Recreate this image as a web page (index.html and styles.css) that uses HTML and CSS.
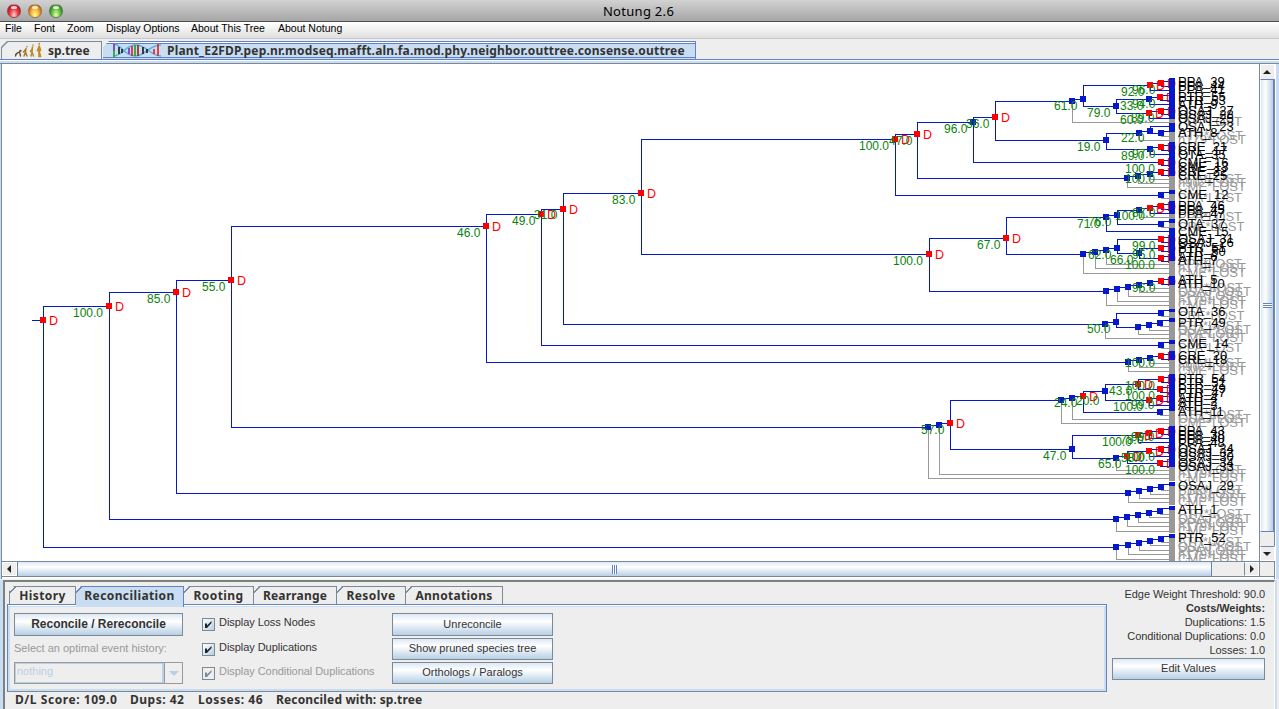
FILE: index.html
```html
<!DOCTYPE html>
<html lang="en">
<head>
<meta charset="utf-8">
<title>Notung 2.6</title>
<link rel="stylesheet" href="styles.css">
</head>
<body>
<header class="titlebar">
  <div class="lights"><i class="light red"></i><i class="light amber"></i><i class="light green"></i></div>
  <h1 class="title">Notung 2.6</h1>
</header>
<nav class="menubar">
  <span class="m-file">File</span><span class="m-font">Font</span><span class="m-zoom">Zoom</span><span class="m-display">Display Options</span><span class="m-tree">About This Tree</span><span>About Notung</span>
</nav>
<div class="doctabs">
  <div class="doctab plain">
    <svg width="30" height="16" viewBox="0 0 30 16" fill="none" stroke-linecap="round">
      <g stroke="#5b4a30" stroke-width="1.3"><path d="M2.500 14l1-2.500 3-1.500 1 4M4 11.500l-1.500 1"/><circle cx="7.500" cy="8.800" r=".5"/></g>
      <g stroke="#a87926" stroke-width="1.400"><path d="M11 14l1.500-4 .5-3.500M12.500 10l1.500 4M12.500 7.500l-2 2.500M14 4.500v.2"/></g>
      <g stroke="#b98a2c" stroke-width="1.500"><path d="M18 14l1-4 .5-5M19 10l1.500 4M19.500 6l-2 3.500M20 3v.2"/></g>
      <g stroke="#c08a1e" stroke-width="1.700"><path d="M26 14.500V4M26 9l1.500 5.500M26 5l-1.500 3.500M26.500 5l1 3.500M26.300 1.700v.2"/></g>
    </svg>
    <span>sp.tree</span>
  </div>
  <div class="doctab current">
    <svg width="50" height="13" viewBox="0 0 50 13" fill="none">
      <path stroke="#58aee0" stroke-width="1.500" d="M1 0C10 0 12 12 23 12S36 1 49 1M1 12C11 12 13 1 24 1S38 12 49 12"/>
      <g stroke-width="1.700"><path stroke="#7935b5" d="M2 0v7"/><path stroke="#25a32d" d="M2 6v7"/><path stroke="#222" d="M7 3v7M31 3v7M10 5v4M35 5v4"/><path stroke="#7935b5" d="M17 4v6"/><path stroke="#e32525" d="M20 2v10"/><path stroke="#25a32d" d="M23 1v11"/><path stroke="#a02a20" d="M26 1v11"/><path stroke="#e32525" d="M46 0v12M42 5v5"/></g>
    </svg>
    <span>Plant_E2FDP.pep.nr.modseq.mafft.aln.fa.mod.phy.neighbor.outtree.consense.outtree</span>
  </div>
  <div class="doctab-rest"></div>
</div>
<main class="workspace">
  <svg class="tree" id="tree" width="1257" height="497" viewBox="2 64 1257 497"></svg>
  <div class="vscroll"><div class="arrow up"></div><div class="vthumb"><i class="vgrip"></i></div><div class="vtrack"></div><div class="arrow down"></div></div>
  <div class="hscroll"><div class="arrow left"></div><div class="hthumb"><i class="hgrip"></i></div><div class="htrack"></div><div class="arrow right"></div></div>
  <div class="corner"></div>
</main>
<section class="controls">
  <div class="taskpane">
    <div class="tabs">
      <span class="tab t-history">History</span><span class="tab t-recon active">Reconciliation</span><span class="tab t-root">Rooting</span><span class="tab t-rearr">Rearrange</span><span class="tab t-resolve">Resolve</span><span class="tab t-annot">Annotations</span>
    </div>
    <div class="panel">
      <div class="col first">
        <button class="btn strong">Reconcile / Rereconcile</button>
        <label class="hint">Select an optimal event history:</label>
        <div class="combo"><span class="combo-value">nothing</span><span class="combo-arrow"></span></div>
      </div>
      <div class="col checks">
        <label class="check"><svg class="box" width="13" height="13" viewBox="1 1 11 11"><path d="M3 5.500h2v2L9.500 3v2L5 10H3z"/></svg>Display Loss Nodes</label>
        <label class="check"><svg class="box" width="13" height="13" viewBox="1 1 11 11"><path d="M3 5.500h2v2L9.500 3v2L5 10H3z"/></svg>Display Duplications</label>
        <label class="check off"><svg class="box" width="13" height="13" viewBox="1 1 11 11"><path d="M3 5.500h2v2L9.500 3v2L5 10H3z"/></svg>Display Conditional Duplications</label>
      </div>
      <div class="col actions">
        <button class="btn">Unreconcile</button>
        <button class="btn">Show pruned species tree</button>
        <button class="btn">Orthologs / Paralogs</button>
      </div>
    </div>
    <div class="status"><span class="s-score">D/L Score: 109.0</span><span class="s-dups">Dups: 42</span><span class="s-loss">Losses: 46</span><span>Reconciled with: sp.tree</span></div>
  </div>
  <aside class="costs">
    <p>Edge Weight Threshold: 90.0</p>
    <p><b>Costs/Weights:</b></p>
    <p>Duplications: 1.5</p>
    <p>Conditional Duplications: 0.0</p>
    <p>Losses: 1.0</p>
    <button class="btn">Edit Values</button>
  </aside>
</section>
<script src="tree.js"></script>
</body>
</html>
```
FILE: styles.css
```css
* { box-sizing: border-box; }
body {
  margin: 0; width: 1279px; height: 709px; overflow: hidden;
  display: flex; flex-direction: column;
  background: #eee; color: #333;
  font-family: "Liberation Sans", Arial, sans-serif; font-size: 11px;
}
.titlebar {
  flex: none; height: 22px; display: grid; grid-template-columns: 70px 1fr 72px; align-items: center;
  background: linear-gradient(#d2d2d2, #a6a6a6); border-bottom: 1px solid #505050;
}
.lights { display: flex; gap: 7px; padding-left: 7px; }
.light { width: 14px; height: 14px; border-radius: 50%; border: 1px solid #6668; }
.red { background: radial-gradient(ellipse at 50% 85%, #ffc4c4 5%, #f2404a 45%, #b80a18 85%); }
.amber { background: radial-gradient(ellipse at 50% 85%, #fff98a 5%, #f7ac35 50%, #b75a0c 88%); }
.green { background: radial-gradient(ellipse at 50% 85%, #d5ff9a 5%, #65bd45 50%, #27741c 88%); }
.light::before { content: ""; display: block; width: 6px; height: 3px; margin: 1px auto 0; border-radius: 50%; background: #fffc; }
.title { margin: 0; text-align: center; font: 13px "Noto Sans", "Open Sans", sans-serif; color: #000; letter-spacing: .3px; }
.menubar {
  flex: none; height: 17px; display: flex; padding-left: 5px; line-height: 12px;
  font-size: 10.5px; color: #000; white-space: nowrap;
  background: linear-gradient(#fff, #e0e0e0); border-bottom: 1px solid #c8c8c8;
}
.m-file { width: 29px; } .m-font { width: 33px; } .m-zoom { width: 39px; } .m-display { width: 85px; } .m-tree { width: 87px; }
.doctabs { flex: none; height: 25px; padding-top: 2px; display: flex; background: linear-gradient(#eee 20px, #6382bf 20px 21px, #fff 21px 22px, #c8ddf2 22px 24px, #7a8a99 24px); }
.doctab {
  display: flex; align-items: center; white-space: nowrap; height: 18px;
  font: bold 12px "Noto Sans", "Open Sans", sans-serif; color: #333;
}
.plain { width: 101px; margin-left: 1px; padding-left: 12px; gap: 5px; background: #7a8a99; clip-path: polygon(6px 0, 100% 0, 100% 100%, 0 100%, 0 6px); position: relative; isolation: isolate; }
.plain::before { content: ""; position: absolute; z-index: -1; inset: 1px 1px 0; background: #eee; clip-path: polygon(6px 0, 100% 0, 100% 100%, 0 100%, 0 6px); }
.current {
  width: 593px; margin-left: 1px; padding-left: 9px; gap: 5px; height: 18px;
  background: linear-gradient(#6382bf 1px, #fff 1px 2px, #6382bf 2px 3px, #c8ddf2 3px 16px, #6382bf 16px 17px, #c8ddf2 17px);
  border-right: 1px solid #6382bf; clip-path: polygon(6px 0, 100% 0, 100% 100%, 0 100%, 0 6px);
}
.current span { letter-spacing: .18px; }
.workspace {
  flex: none; height: 515px; display: grid; grid-template: 497px 16px / 1257px 16px;
  border-left: 1px solid #c8ddf2; box-shadow: inset 1px 0 #7a8a99; padding-left: 1px; background: linear-gradient(90deg, #fff 1273px, #7a8a99 1273px 1274px, #fff 1274px 1275px, #c8ddf2 1275px 1278px, #7a8a99 1278px);
}
.tree { display: block; background: #fff; }
.tree text { font-size: 13px; }
.tree .support { font-size: 12px; }
.tree .dup { font-size: 12.5px; }
.tree .support { fill: #0a820a; } .tree .dup { fill: #f00; } .tree .lost { fill: #999; } .tree .gene { fill: #000; }
.tree path { fill: none; shape-rendering: crispEdges; }
.line-gene { stroke: #0618cc; } .line-lost { stroke: #999; }
.mark-gene, .mark-dup { stroke-width: 6; } .mark-gene { stroke: #0618cc; } .mark-dup { stroke: red; }
.bar-lost, .bar-gene { stroke-width: 6; } .bar-lost { stroke: #999; } .bar-gene { stroke: #0618cc; }
.vscroll { display: flex; flex-direction: column; border: solid #7a8a99; border-width: 0 1px; }
.hscroll { display: flex; border: solid #7a8a99; border-width: 1px 0; }
.arrow { flex: none; width: 15px; height: 14px; display: grid; place-items: center; background: #eee; border: 1px solid #fff; }
.arrow::before { content: ""; border: 4px solid transparent; }
.up { border-bottom: 0; height: 15px; } .up::before { border-bottom-color: #222; border-top: 0; }
.down { border-top: 1px solid #7a8a99; height: 15px; } .down::before { border-top-color: #222; border-bottom: 0; }
.up::before, .down::before { margin-right: 2px; }
.left::before { border-right-color: #222; border-left: 0; margin-right: 2px; }
.right { border-left-color: #7a8a99; } .right::before { border-left-color: #222; border-right: 0; }
.vthumb { height: 453px; width: 14px; border: 1px solid #6382bf; border-left-color: #fff; background: linear-gradient(90deg, #dce9f6, #fff 35%, #b8cfe5); display: grid; place-items: center; }
.vgrip { width: 9px; height: 5px; background: repeating-linear-gradient(#6382bf 0 1px, #fff 1px 2px); }
.vtrack { flex: 1; }
.hthumb { width: 1195px; border: 1px solid #6382bf; border-width: 0 1px; background: linear-gradient(#dce9f6, #fff 35%, #b8cfe5); display: grid; place-items: center; }
.hgrip { width: 5px; height: 9px; background: repeating-linear-gradient(90deg, #6382bf 0 1px, #fff 1px 2px); }
.hscroll { background: #eee; } .htrack { flex: 1; } .vtrack { background: #eee; }
.corner { background: #eee; border: 1px solid #7a8a99; }
.controls {
  flex: 1; display: flex; margin: 1px 4px 0 3px; border: 2px solid #7d8280; border-width: 2px 1px 0 2px;
  border-right-color: #fff; box-shadow: -3px 0 #c8ddf2, 2px 0 #c8ddf2;
}
.taskpane { width: 1102px; padding: 4px 0 0 2px; }
.tabs { display: flex; height: 18px; padding-left: 2px; }
.tab {
  --edge: #7a8a99; --fill: #eee;
  flex: none; height: 18px; text-align: center; font: bold 12px/18px "Noto Sans", "Open Sans", sans-serif; letter-spacing: .4px;
  border: 1px solid var(--edge); border-width: 1px 1px 0 0;
  background: linear-gradient(135deg, #eee 3.500px, var(--edge) 3.500px 4.300px, var(--fill) 4.300px);
  clip-path: polygon(5px 0, 100% 0, 100% 100%, 0 100%, 0 5px);
}
.t-history { width: 67px; border-left-width: 1px; } .t-recon { width: 108px; } .t-root { width: 70px; } .t-rearr { width: 83px; } .t-resolve { width: 69px; } .t-annot { width: 97px; }
.t-annot { letter-spacing: .3px; } .t-rearr { letter-spacing: .2px; }
.active { --edge: #6382bf; --fill: #c8ddf2; height: 21px; z-index: 1; }
.panel {
  height: 88px; display: flex; padding: 6px 0 0 4px;
  border: 1px solid #6382bf; border-bottom-color: #7a8a99; box-shadow: inset 0 1px #fff, inset 0 0 0 2px #c8ddf2;
}
.btn {
  display: block; width: 100%; height: 22px; padding: 0 0 2px; font: 11px "Liberation Sans", Arial, sans-serif; color: #333;
  border: 1px solid #7a8a99; background: linear-gradient(#dde8f3, #fff 35%, #b8cfe5);
}
.first { width: 169px; margin-left: 2px; padding-top: 2px; }
.strong { font: bold 12px "Liberation Sans", Arial, sans-serif; height: 23px; }
.hint { display: block; height: 26px; line-height: 24px; color: #999; font-size: 11px; white-space: nowrap; }
.combo { display: flex; height: 22px; border: 1px solid #999; }
.combo-value { width: 149px; border: 1px solid #b8cfe5; border-width: 1px 2px 1px 1px; color: #b8cfe5; line-height: 15px; padding-left: 1px; }
.combo-arrow { flex: 1; border-left: 1px solid #999; display: grid; place-items: center; }
.combo-arrow::before { content: ""; border: 5px solid transparent; border-top-color: #b8cfe5; border-bottom: 0; }
.checks { width: 190px; margin-left: 19px; padding-top: 2px; }
.check { display: flex; height: 24.500px; gap: 4px; line-height: 19px; font-size: 11px; letter-spacing: -.05px; white-space: nowrap; }
.box { flex: none; margin-top: 5px; border: 1px solid #7a8a99; background: linear-gradient(135deg, #fff, #b8cfe5); fill: #222; }
.off { color: #999; } .off .box { fill: #7a8a99; background: #eee; }
.actions { width: 161px; padding-top: 2px; display: flex; flex-direction: column; gap: 2px; }
.actions .btn:first-child { height: 23px; }
.actions .btn { letter-spacing: .02px; }
.status { display: flex; padding-left: 8px; font: bold 12px/16px "Noto Sans", "Open Sans", sans-serif; letter-spacing: .15px; white-space: nowrap; }
.s-score { width: 115px; letter-spacing: .55px; } .s-dups { width: 68px; letter-spacing: .5px; } .s-loss { width: 78px; letter-spacing: .55px; }
.costs { flex: 1; padding: 5px 9px 0 5px; text-align: right; font-size: 11px; line-height: 14px; white-space: nowrap; letter-spacing: -.06px; }
.costs p { margin: 0; }
.costs .btn { margin-top: 1px; }
```
FILE: tree.js
```js
// Node: [x, y, kind, ...children]; kind "d" = duplication, "g" = gene node.
// A numeric child is a leaf row: positive = gene, negative = lost.
const END = 1170;
const pair = (x, y) => [x, y, "d", y - 2, y + 3];
const single = (x, y) => [x, y, "g", y - 3, -(y + 3)];

const root = [43, 320, "d",
  [109, 306, "d",
    [176, 292, "d",
      [231, 280, "d",
        [486, 226, "d",
          [541, 214, "d",
            [563, 209, "d",
              [641, 193, "d",
                [895, 139, "d",
                  [917, 134, "d",
                    [973, 122, "g",
                      [995, 117, "d",
                        [1072, 101, "g",
                          [1083, 99, "g",
                            [1150, 85, "d", pair(1161, 83), 90],
                            [1116, 106, "g", [1149, 99, "g", pair(1160, 97), 104], [1149, 113, "d", pair(1161, 111), 118]]],
                          -122],
                        [1106, 140, "g",
                          [1139, 133, "g", [1150, 131, "g", 126, [1161, 133, "g", 131, -136]], -140],
                          [1150, 149, "g", pair(1161, 147), 154]]],
                      pair(1161, 162)],
                    [1127, 178, "g", [1138, 176, "g", [1150, 174, "g", pair(1161, 172), -179], -183], -187]],
                  single(1161, 195)],
                [929, 254, "d",
                  [1006, 238, "d",
                    [1106, 217, "g",
                      [1117, 215, "g", [1139, 210, "g", [1150, 208, "d", pair(1161, 206), 213], -217], single(1161, 224)],
                      231],
                    [1083, 254, "g", [1095, 252, "g", [1106, 250, "g",
                      [1117, 248, "g", pair(1161, 239), [1139, 253, "g", pair(1161, 248), pair(1161, 258)]], -264], -268], -273]],
                  [1106, 291, "g", [1117, 289, "g", [1128, 287, "g", [1139, 285, "g", [1150, 283, "g", pair(1161, 281), -288], -292], -296], -301], -305]]],
              [1105, 324, "g", [1116, 322, "g", single(1161, 313), [1138, 327, "g", [1149, 325, "g", single(1160, 323), -330], -334]], -338]],
            single(1161, 345)],
          [1128, 362, "g", [1139, 360, "g", [1150, 358, "g", pair(1161, 356), -363], -367], -371]],
        [928, 427, "g", [939, 425, "g", [950, 423, "d",
          [1061, 400, "g", [1072, 398, "g", [1083, 396, "d",
            [1105, 391, "g", [1138, 384, "d", pair(1161, 379), pair(1160, 389)], [1149, 400, "d", pair(1160, 398), 405]],
            single(1160, 412)], -419], -423],
          [1072, 449, "g",
            [1138, 435, "d", [1149, 433, "d", pair(1161, 431), 438], 442],
            [1116, 458, "g", [1127, 456, "d", [1149, 451, "d", pair(1161, 449), 456], pair(1160, 463)], -470]]],
          -474], -478]],
      [1128, 493, "g", [1139, 491, "g", [1150, 489, "g", single(1161, 487), -494], -498], -502]],
    [1116, 519, "g", [1127, 517, "g", [1138, 515, "g", [1149, 513, "g", single(1160, 511), -517], -522], -526], -531]],
  [1116, 547, "g", [1128, 545, "g", [1139, 543, "g", [1150, 541, "g", single(1161, 539), -545], -550], -554], -559]];

const support = `73 317 100.0|147 303 85.0|202 291 55.0|457 237 46.0|512 225 49.0|534 219 31.0|612 204 83.0|859 150 100.0
889 145 47.0|944 133 96.0|966 128 36.0|1054 110 61.0|1087 117 79.0|1121 96 92.0|1132 94 96.0|1120 110 33.0|1132 108 94.0
1120 124 60.0|1131 122 89.0|1121 142 22.0|1077 151 19.0|1121 160 89.0|1132 158 97.0|1125 173 100.0|1125 183 100.0
1077 228 71.0|1088 226 76.0|1115 220 100.0|1132 217 87.0|977 249 67.0|893 265 100.0|1088 259 62.0|1110 264 66.0
1132 250 99.0|1132 259 95.0|1125 269 100.0|1132 292 96.0|1087 333 50.0|1125 367 100.0|1054 407 24.0|1076 405 20.0
1109 395 43.0|1125 390 100.0|1125 400 100.0|1113 411 100.0|1131 409 99.0|921 434 57.0|1043 460 47.0|1102 446 100.0
1120 444 78.0|1131 441 99.0|1098 468 65.0|1121 462 58.0|1125 461 100.0|1125 474 100.0`;

const lost = `126 PPA|140 PTR|144 n179|183 PPA|187 n902|191 CME|202 PPA|221 PPA|231 CRE|268 PPA|272 n179|277 CME|292 PTR|296 OSAJ
300 PPA|305 n179|309 CME|320 CRE|330 ATH|334 OSAJ|338 PPA|342 CME|352 PPA|367 PPA|371 n902|375 CME|419 PTR|423 OSAJ|427 CME
474 PPA|478 n179|482 CME|494 PTR|498 PPA|502 n179|506 CME|518 PTR|523 OSAJ|527 PPA|531 n179|535 CME|546 ATH|551 OSAJ|555 PPA|559 n179|563 CME`;

const genes = `86 PPA_39|90 PPA_44|94 PPA_41|101 PTR_55|105 PTR_53|109 ATH_9|115 OSAJ_27|119 OSAJ_28|123 OSAJ_25|131 OSAJ_23|137 ATH_8
151 CRE_21|155 CRE_17|159 OTA_35|167 CME_16|171 CME_13|176 CRE_22|180 CRE_25|199 CME_12|210 PPA_46|214 PPA_45|218 PPA_47
228 OTA_37|236 CME_15|243 OSAJ_31|247 OSAJ_26|252 PTR_51|256 PTR_50|261 ATH_6|265 ATH_7|284 ATH_5|288 ATH_10|316 OTA_36
327 PTR_49|348 CME_14|360 CRE_20|364 CRE_18|383 PTR_54|387 PTR_51|393 PTR_49|397 PTR_47|402 ATH_4|406 ATH_2|410 ATH_3|416 ATH_11
435 PPA_43|439 PPA_38|443 PPA_40|447 PPA_48|453 OSAJ_24|457 OSAJ_32|461 OSAJ_30|467 OSAJ_34|471 OSAJ_33|490 OSAJ_29|514 ATH_1|542 PTR_52`;

const geneRows = [[78,119],[123,132],[142,176],[190,194],[201,214],[219,223],[228,261],[276,285],[309,312],[318,322],
  [340,344],[351,360],[374,411],[426,467],[482,486],[506,510],[534,538]];
const lostRows = [[119,481],[486,505],[510,533],[538,561]];

const d = { gene: "M32 320.5H43", lost: "", markG: "", markD: "" };
const dups = [];
function walk([x, y, kind, ...children]) {
  for (const c of children) {
    if (Array.isArray(c)) {
      d.gene += `M${x + .5} ${y + .5}V${c[1] + .5}H${c[0]}`;
      walk(c);
    } else {
      d[c > 0 ? "gene" : "lost"] += `M${x + .5} ${y + .5}V${Math.abs(c) + .5}H${END}`;
    }
  }
  d[kind === "d" ? "markD" : "markG"] += `M${x - 3} ${y}h6`;
  if (kind === "d") dups.push([x + 6, y + 5, "D"]);
}
walk(root);

const path = (cls, data) => `<path class="${cls}" d="${data}"/>`;
const text = (cls, [x, y, s]) => `<text class="${cls}" x="${x}" y="${y}">${s}</text>`;
const parse = src => src.split(/[|\n]/).map(r => r.split(" "));
const rows = list => list.map(([a, b]) => `M1172 ${a}V${b}`).join("");

document.getElementById("tree").innerHTML =
  path("line-lost", d.lost) + path("line-gene", d.gene) +
  path("mark-gene", d.markG) + path("mark-dup", d.markD) +
  dups.map(t => text("dup", t)).join("") +
  parse(support).map(t => text("support", t)).join("") +
  path("bar-lost", rows(lostRows)) + path("bar-gene", rows(geneRows)) +
  parse(lost).map(([y, s]) => text("lost", [1178, y, s + "*LOST"])).join("") +
  parse(genes).map(([y, s]) => text("gene", [1178, y, s])).join("");
```
